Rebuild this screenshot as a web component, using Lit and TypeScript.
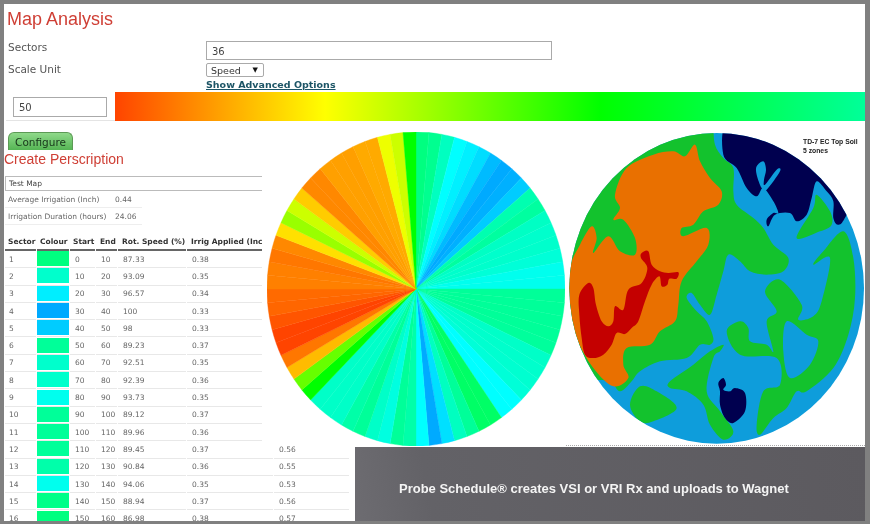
import { html, css, svg, LitElement } from 'lit';
import { customElement } from 'lit/decorators.js';

// speed, colour and irrigation per row of the sector table
const ROWS: [string, string, string, string][] = [
  ['87.33', '#00ff80', '0.38', ''],
  ['93.09', '#00ffcc', '0.35', ''],
  ['96.57', '#00eeff', '0.34', ''],
  ['100', '#00aaff', '0.33', ''],
  ['98', '#00ccff', '0.33', ''],
  ['89.23', '#00ff99', '0.37', ''],
  ['92.51', '#00ffcc', '0.35', ''],
  ['92.39', '#00ffcc', '0.36', ''],
  ['93.73', '#00ffee', '0.35', ''],
  ['89.12', '#00ff99', '0.37', ''],
  ['89.96', '#00ff99', '0.36', ''],
  ['89.45', '#00ff99', '0.37', '0.56'],
  ['90.84', '#00ffaa', '0.36', '0.55'],
  ['94.06', '#00ffee', '0.35', '0.53'],
  ['88.94', '#00ff88', '0.37', '0.56'],
  ['86.98', '#00ff80', '0.38', '0.57'],
];

// pie wedges, 5 degrees each, clockwise from north
const WEDGES = [
  '#00ff80', '#00ff90', '#00ffc0', '#00ffff', '#00f0ff', '#00ddff', '#00bbff', '#00aaff', '#00b0ff',
  '#00ccff', '#00ffb0', '#00ffa0', '#00ffc4', '#00ffcc', '#00ffcc', '#00ffd8', '#00ffee', '#00ffee',
  '#00ff99', '#00ff99', '#00ff99', '#00ff99', '#00ff9c', '#00ffc8', '#00ffcc', '#00ffd0', '#00ffd8',
  '#00ffff', '#00ffff', '#00ff66', '#00ff66', '#00ff99', '#00ffc0', '#00e0ff', '#00aaff', '#00ffff',
  '#00ffaa', '#00ff99', '#00ffe0', '#00ffc8', '#00ff99', '#00ffa8', '#00ffc8', '#00ffc8', '#00ffc8',
  '#00ff00', '#66ff00', '#ffbb00', '#ff7700', '#ff4400', '#ff4400', '#ff5500', '#ff6600', '#ff6a00',
  '#ff8000', '#ff8000', '#ff7700', '#ff8800', '#ffe000', '#99ff00', '#ccff00', '#ffcc00', '#ff8800',
  '#ff8800', '#ffa000', '#ffa000', '#ff9f00', '#ffaa00', '#ffaa00', '#eeff00', '#ccff00', '#00ff00',
];

// zone outlines as point lists, in 3x crop coordinates; smooth() rounds them
const GREEN = [
  '460,0 465,60 490,100 520,130 520,200 530,240 580,280 610,310 640,360 685,400 670,440 620,450 570,440 540,410 505,390 490,440 470,510 450,570 420,540 395,505 380,520 410,560 440,590 460,640 450,660 420,660 380,700 300,710 240,740 215,770 180,800 150,770 90,760 -40,700 -40,-40 460,-40',
  '615,500 660,465 725,540 715,585 760,575 785,530 810,400 760,420 790,380 850,320 880,400 885,520 865,630 820,730 740,800 710,800 680,850 640,880 600,930 590,900 610,800 660,780 650,700 540,690 500,620 540,590 565,610 570,650 620,660 640,680 620,590 650,560',
  '710,340 760,250 770,210 810,260 815,300 780,320',
  '330,770 400,720 450,680 490,660 480,680 460,700 440,800 480,860 520,920 490,945 450,900 430,840 380,800 330,790',
  '210,840 240,785 290,800 350,850 280,890 240,890',
];
const BLUE = [
  '680,590 740,630 775,650 750,720 690,760 670,680',
  '590,125 610,110 618,135 612,165 615,180 650,135 660,140 620,195 605,190 590,150',
];
const ORANGE =
  '165,210 200,130 280,90 340,80 375,95 405,60 420,110 450,160 485,200 475,240 430,260 400,300 365,310 370,335 440,310 445,360 410,410 365,470 355,540 345,590 300,620 270,660 200,670 190,720 205,760 160,785 100,730 50,640 30,540 30,430 60,360 95,305 110,340 100,385 145,335 180,380 225,390 225,340 190,285 160,285 180,250';
const RED =
  '245,385 265,380 275,420 300,440 325,445 355,443 350,462 328,462 322,480 305,485 298,455 275,480 255,530 235,590 215,610 195,628 170,625 155,660 130,690 100,700 75,690 65,640 58,570 58,510 85,475 100,490 108,540 125,590 145,605 160,590 165,545 190,555 205,495 245,475 262,430 243,400';
const NAVY = [
  '500,-10 490,90 530,130 560,190 590,215 610,190 640,230 655,265 640,265 620,285 625,305 645,270 690,265 710,290 740,270 755,220 770,170 800,200 820,230 820,280 835,300 860,270 940,100 600,-40',
  '475,775 490,760 498,780 490,795 510,800 525,790 555,805 555,860 520,895 495,880 480,840 480,800',
];

// closed Catmull-Rom curve through the points
function smooth(list: string) {
  const pts = list.split(' ').map((p) => p.split(',').map(Number));
  const n = pts.length;
  let d = `M${pts[0][0]},${pts[0][1]}`;
  for (let i = 0; i < n; i++) {
    const [p0, p1, p2, p3] = [pts[(i + n - 1) % n], pts[i], pts[(i + 1) % n], pts[(i + 2) % n]];
    const c1 = [p1[0] + (p2[0] - p0[0]) / 6, p1[1] + (p2[1] - p0[1]) / 6];
    const c2 = [p2[0] - (p3[0] - p1[0]) / 6, p2[1] - (p3[1] - p1[1]) / 6];
    d += ` C${c1[0].toFixed(1)},${c1[1].toFixed(1)} ${c2[0].toFixed(1)},${c2[1].toFixed(1)} ${p2[0]},${p2[1]}`;
  }
  return d + 'Z';
}

@customElement('app-root')
export class AppRoot extends LitElement {
  static styles = css`
    :host {
      display: block;
      box-sizing: border-box;
      width: 870px;
      height: 524px;
      padding: 4px 5px 3px 4px;
      background: #808080;
      overflow: hidden;
    }

    .page {
      position: relative;
      height: 517px;
      overflow: hidden;
      background: #fff;
      color: #555;
      font-family: 'DejaVu Sans', sans-serif;
      filter: blur(0.35px);
    }

    h1 {
      margin: 0;
      padding: 4px 0 0 3px;
      height: 26px;
      box-sizing: border-box;
      font: 400 18px/22px 'Liberation Sans', sans-serif;
      color: #cf3f35;
    }

    .form {
      display: grid;
      grid-template-columns: 198px 1fr;
      padding: 11px 0 0 4px;
      font-size: 10.5px;
    }

    .field {
      box-sizing: border-box;
      height: 19px;
      padding: 0 5px;
      border: 1px solid #aaa;
      font-size: 10px;
      line-height: 19px;
      color: #444;
      background: #fff;
    }

    .sectors {
      width: 346px;
      margin-bottom: 3px;
    }

    .unit {
      display: flex;
      align-items: center;
      justify-content: space-between;
      box-sizing: border-box;
      width: 58px;
      height: 14px;
      padding: 0 5px 0 4px;
      border: 1px solid #aaa;
      border-radius: 2px;
      font-size: 9.5px;
      color: #333;
    }

    .unit span {
      font-size: 7px;
      color: #111;
    }

    .advanced {
      grid-column: 2;
      height: 15px;
      font-size: 9.5px;
      line-height: 16px;
      font-weight: 700;
      color: #1d5566;
      text-decoration: underline;
    }

    .gauge {
      display: flex;
      height: 29px;
    }

    .gauge-value {
      box-sizing: border-box;
      width: 111px;
      padding: 5px 0 0 7px;
      margin-left: 2px;
      border-bottom: 1px solid #e4e4e4;
    }

    .gauge-value .field {
      width: 94px;
      height: 20px;
    }

    .bar {
      flex: 1;
      margin-left: -2px;
      background: linear-gradient(90deg, #ff4400 0%, #ffff00 28%, #00ff00 64.7%, #00ff99 100%);
    }

    .configure {
      box-sizing: border-box;
      width: 65px;
      height: 18px;
      margin: 11px 0 0 4px;
      border: 1px solid #5c9a55;
      border-bottom: 0;
      border-radius: 6px 6px 0 0;
      background: linear-gradient(#8fd98a, #55b554);
      font-size: 10.5px;
      line-height: 19px;
      text-align: center;
      color: #17351a;
    }

    h2 {
      margin: 0;
      height: 19px;
      font: 400 14px/18px 'Liberation Sans', sans-serif;
      color: #cf3f35;
    }

    .map-name {
      box-sizing: border-box;
      width: 257px;
      height: 15px;
      margin: 7px 0 0 1px;
      padding-left: 3px;
      border: 1px solid #bbb;
      border-right: 0;
      font-size: 7.5px;
      line-height: 13px;
      color: #444;
    }

    .stats {
      display: grid;
      grid-template-columns: 107px 30px;
      margin: 0 0 0 1px;
      width: 137px;
      font-size: 7.5px;
      color: #666;
    }

    .stats div {
      height: 17px;
      padding-left: 3px;
      line-height: 18px;
      white-space: nowrap;
      border-bottom: 1px solid #eee;
      box-sizing: border-box;
    }

    table {
      width: 346px;
      margin-top: 7px;
      table-layout: fixed;
      border-collapse: separate;
      border-spacing: 1px 0;
      font-size: 7.5px;
      color: #666;
    }

    th {
      height: 19px;
      box-sizing: border-box;
      padding: 2px 0 0 3px;
      border-bottom: 2px solid #666;
      font-weight: 700;
      text-align: left;
      color: #333;
      white-space: nowrap;
      overflow: hidden;
    }

    th.wide {
      padding-left: 4px;
    }

    td {
      height: 17.3px;
      box-sizing: border-box;
      padding: 0 0 0 5px;
      border-bottom: 1px solid #e8e8e8;
    }

    td.sector {
      padding-left: 4px;
    }

    td.swatch-cell {
      padding: 0 0 1px;
    }

    .swatch {
      height: 15px;
    }

    .over {
      position: absolute;
      left: 258px;
      top: 122px;
      display: flex;
      width: 603px;
      height: 320px;
      box-sizing: border-box;
      padding: 6px 0 0 5px;
      background: #fff;
    }

    .zones {
      position: relative;
      margin: 1px 0 0 4px;
      height: 313px;
    }

    .zones-label {
      position: absolute;
      left: 234px;
      top: 5px;
      font: 700 6.8px/8.5px 'Liberation Sans', sans-serif;
      color: #222;
    }

    .rule {
      position: absolute;
      left: 562px;
      top: 441px;
      width: 299px;
      border-top: 1px dotted #aaa;
    }

    .banner {
      position: absolute;
      left: 351px;
      top: 443px;
      width: 510px;
      height: 74px;
      box-sizing: border-box;
      padding: 31px 0 0 44px;
      background: linear-gradient(80deg, #6d6c71 0%, #636267 15%, #5c5a5f 100%);
      font: 700 13px/22px 'Liberation Sans', sans-serif;
      color: #f4f4f4;
    }
  `;

  private wedgePath(i: number) {
    const rx = 149;
    const ry = 157;
    const point = (deg: number) => {
      const a = (deg * Math.PI) / 180;
      return `${(149 + rx * Math.sin(a)).toFixed(2)},${(157 - ry * Math.cos(a)).toFixed(2)}`;
    };
    return `M149,157 L${point(i * 5)} A${rx},${ry} 0 0 1 ${point((i + 1) * 5)}Z`;
  }

  private renderPie() {
    return html`
      <svg width="298" height="314" viewBox="0 0 298 314">
        ${WEDGES.map(
          (c, i) => svg`<path d=${this.wedgePath(i)} fill=${c} stroke=${c} stroke-width="0.4"></path>`
        )}
      </svg>
    `;
  }

  private renderZones() {
    return html`
      <svg width="295" height="311" viewBox="27 25 885 933">
        <defs>
          <clipPath id="disc"><ellipse cx="470" cy="491" rx="442" ry="466"></ellipse></clipPath>
        </defs>
        <g clip-path="url(#disc)">
          <rect x="0" y="0" width="930" height="990" fill="#0e9ddb"></rect>
          ${GREEN.map((p) => svg`<path d=${smooth(p)} fill="#13c22d"></path>`)}
          <path d=${smooth(ORANGE)} fill="#e97000"></path>
          <path d=${smooth(RED)} fill="#c40000"></path>
          ${NAVY.map((p) => svg`<path d=${smooth(p)} fill="#00004f"></path>`)}
          ${BLUE.map((p) => svg`<path d=${smooth(p)} fill="#0e9ddb"></path>`)}
        </g>
      </svg>
    `;
  }

  render() {
    return html`
      <div class="page">
        <h1>Map Analysis</h1>
        <div class="form">
          <div>Sectors</div>
          <div class="field sectors">36</div>
          <div>Scale Unit</div>
          <div class="unit">Speed <span>▼</span></div>
          <div class="advanced">Show Advanced Options</div>
        </div>
        <div class="gauge">
          <div class="gauge-value"><div class="field">50</div></div>
          <div class="bar"></div>
        </div>
        <div class="configure">Configure</div>
        <h2>Create Perscription</h2>
        <div class="map-name">Test Map</div>
        <div class="stats">
          <div>Average Irrigation (Inch)</div>
          <div>0.44</div>
          <div>Irrigation Duration (hours)</div>
          <div>24.06</div>
        </div>
        <table>
          <colgroup>
            <col style="width:31px" />
            <col style="width:32px" />
            <col style="width:25px" />
            <col style="width:21px" />
            <col style="width:68px" />
            <col style="width:86px" />
            <col style="width:75px" />
          </colgroup>
          <tr>
            <th>Sector</th>
            <th>Colour</th>
            <th>Start</th>
            <th class="wide">End</th>
            <th class="wide">Rot. Speed (%)</th>
            <th class="wide">Irrig Applied (Inch)</th>
            <th></th>
          </tr>
          ${ROWS.map(
            ([speed, colour, irrig, last], i) => html`
              <tr>
                <td class="sector">${i + 1}</td>
                <td class="swatch-cell"><div class="swatch" style="background:${colour}"></div></td>
                <td>${i * 10}</td>
                <td>${(i + 1) * 10}</td>
                <td>${speed}</td>
                <td>${irrig}</td>
                <td>${last}</td>
              </tr>
            `
          )}
        </table>
        <div class="over">
          ${this.renderPie()}
          <div class="zones">
            ${this.renderZones()}
            <div class="zones-label">TD-7 EC Top Soil<br />5 zones</div>
          </div>
        </div>
        <div class="rule"></div>
        <div class="banner">Probe Schedule® creates VSI or VRI Rx and uploads to Wagnet</div>
      </div>
    `;
  }
}
